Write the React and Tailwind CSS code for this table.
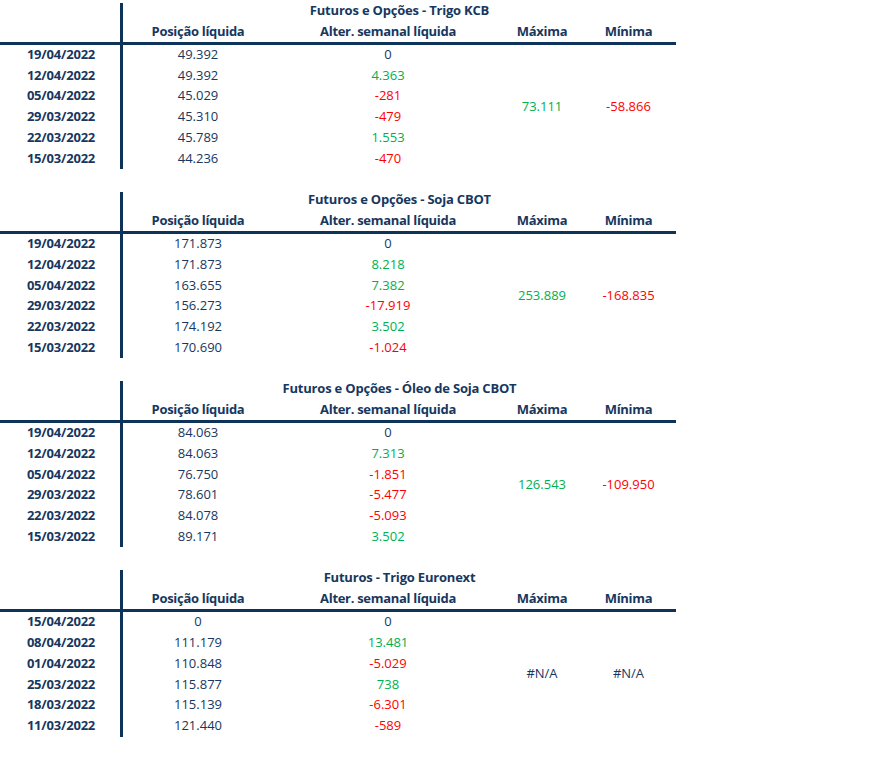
const tables = [
  {
    title: 'Futuros e Opções - Trigo KCB',
    max: '73.111',
    min: '-58.866',
    maxTone: 'pos',
    minTone: 'neg',
    rows: [
      ['19/04/2022', '49.392', '0'],
      ['12/04/2022', '49.392', '4.363'],
      ['05/04/2022', '45.029', '-281'],
      ['29/03/2022', '45.310', '-479'],
      ['22/03/2022', '45.789', '1.553'],
      ['15/03/2022', '44.236', '-470'],
    ],
  },
  {
    title: 'Futuros e Opções - Soja CBOT',
    max: '253.889',
    min: '-168.835',
    maxTone: 'pos',
    minTone: 'neg',
    rows: [
      ['19/04/2022', '171.873', '0'],
      ['12/04/2022', '171.873', '8.218'],
      ['05/04/2022', '163.655', '7.382'],
      ['29/03/2022', '156.273', '-17.919'],
      ['22/03/2022', '174.192', '3.502'],
      ['15/03/2022', '170.690', '-1.024'],
    ],
  },
  {
    title: 'Futuros e Opções - Óleo de Soja CBOT',
    max: '126.543',
    min: '-109.950',
    maxTone: 'pos',
    minTone: 'neg',
    rows: [
      ['19/04/2022', '84.063', '0'],
      ['12/04/2022', '84.063', '7.313'],
      ['05/04/2022', '76.750', '-1.851'],
      ['29/03/2022', '78.601', '-5.477'],
      ['22/03/2022', '84.078', '-5.093'],
      ['15/03/2022', '89.171', '3.502'],
    ],
  },
  {
    title: 'Futuros - Trigo Euronext',
    max: '#N/A',
    min: '#N/A',
    maxTone: 'none',
    minTone: 'none',
    rows: [
      ['15/04/2022', '0', '0'],
      ['08/04/2022', '111.179', '13.481'],
      ['01/04/2022', '110.848', '-5.029'],
      ['25/03/2022', '115.877', '738'],
      ['18/03/2022', '115.139', '-6.301'],
      ['11/03/2022', '121.440', '-589'],
    ],
  },
]

// zero stays navy, negatives red, positives green
function tone(v) {
  if (v === '0') return 'text-[#17375e]'
  return v.startsWith('-') ? 'text-[#ff0000]' : 'text-[#00b050]'
}

const toneClass = {
  pos: 'text-[#00b050]',
  neg: 'text-[#ff0000]',
  none: 'text-[#17375e]',
}

function Table({ t }) {
  return (
    <div className="grid w-[676px] grid-cols-[120px_3px_150px_230px_78px_95px] grid-rows-[21px_21px_3px_repeat(6,20.7px)] text-[13px] text-[#17375e]">
      <div className="col-start-2 row-start-1 row-end-10 mt-[3px] bg-[#0e3358]" />
      <div className="col-start-3 col-span-4 row-start-1 flex items-center justify-center font-bold tracking-[-0.2px]">
        {t.title}
      </div>
      <div className="col-start-3 row-start-2 flex items-center justify-center font-bold tracking-[-0.3px]">Posição líquida</div>
      <div className="col-start-4 row-start-2 flex items-center justify-center font-bold tracking-[-0.3px]">Alter. semanal líquida</div>
      <div className="col-start-5 row-start-2 flex items-center justify-center font-bold tracking-[-0.3px]">Máxima</div>
      <div className="col-start-6 row-start-2 flex items-center justify-center font-bold tracking-[-0.3px]">Mínima</div>
      <div className="col-start-1 col-span-6 row-start-3 bg-[#0e3358]" />
      {t.rows.map((r, i) => (
        <div key={i} className="contents">
          <div className="col-start-1 flex items-center justify-center pb-[1px] pl-[2px] font-bold tracking-[-0.2px]" style={{ gridRowStart: i + 4 }}>
            {r[0]}
          </div>
          <div className="col-start-3 flex items-center justify-center pb-[1px]" style={{ gridRowStart: i + 4 }}>
            {r[1]}
          </div>
          <div className={`col-start-4 flex items-center justify-center pb-[1px] ${tone(r[2])}`} style={{ gridRowStart: i + 4 }}>
            {r[2]}
          </div>
        </div>
      ))}
      <div className={`col-start-5 row-start-4 row-end-10 flex items-center justify-center pb-[1px] ${toneClass[t.maxTone]}`}>
        {t.max}
      </div>
      <div className={`col-start-6 row-start-4 row-end-10 flex items-center justify-center pb-[1px] ${toneClass[t.minTone]}`}>
        {t.min}
      </div>
    </div>
  )
}

export default function App() {
  return (
    <div className="min-h-[784px] w-[886px] bg-white" style={{ fontFamily: '"Open Sans", sans-serif' }}>
      <div className="flex flex-col gap-[20px]">
        {tables.map((t, i) => (
          <Table key={i} t={t} />
        ))}
      </div>
    </div>
  )
}
